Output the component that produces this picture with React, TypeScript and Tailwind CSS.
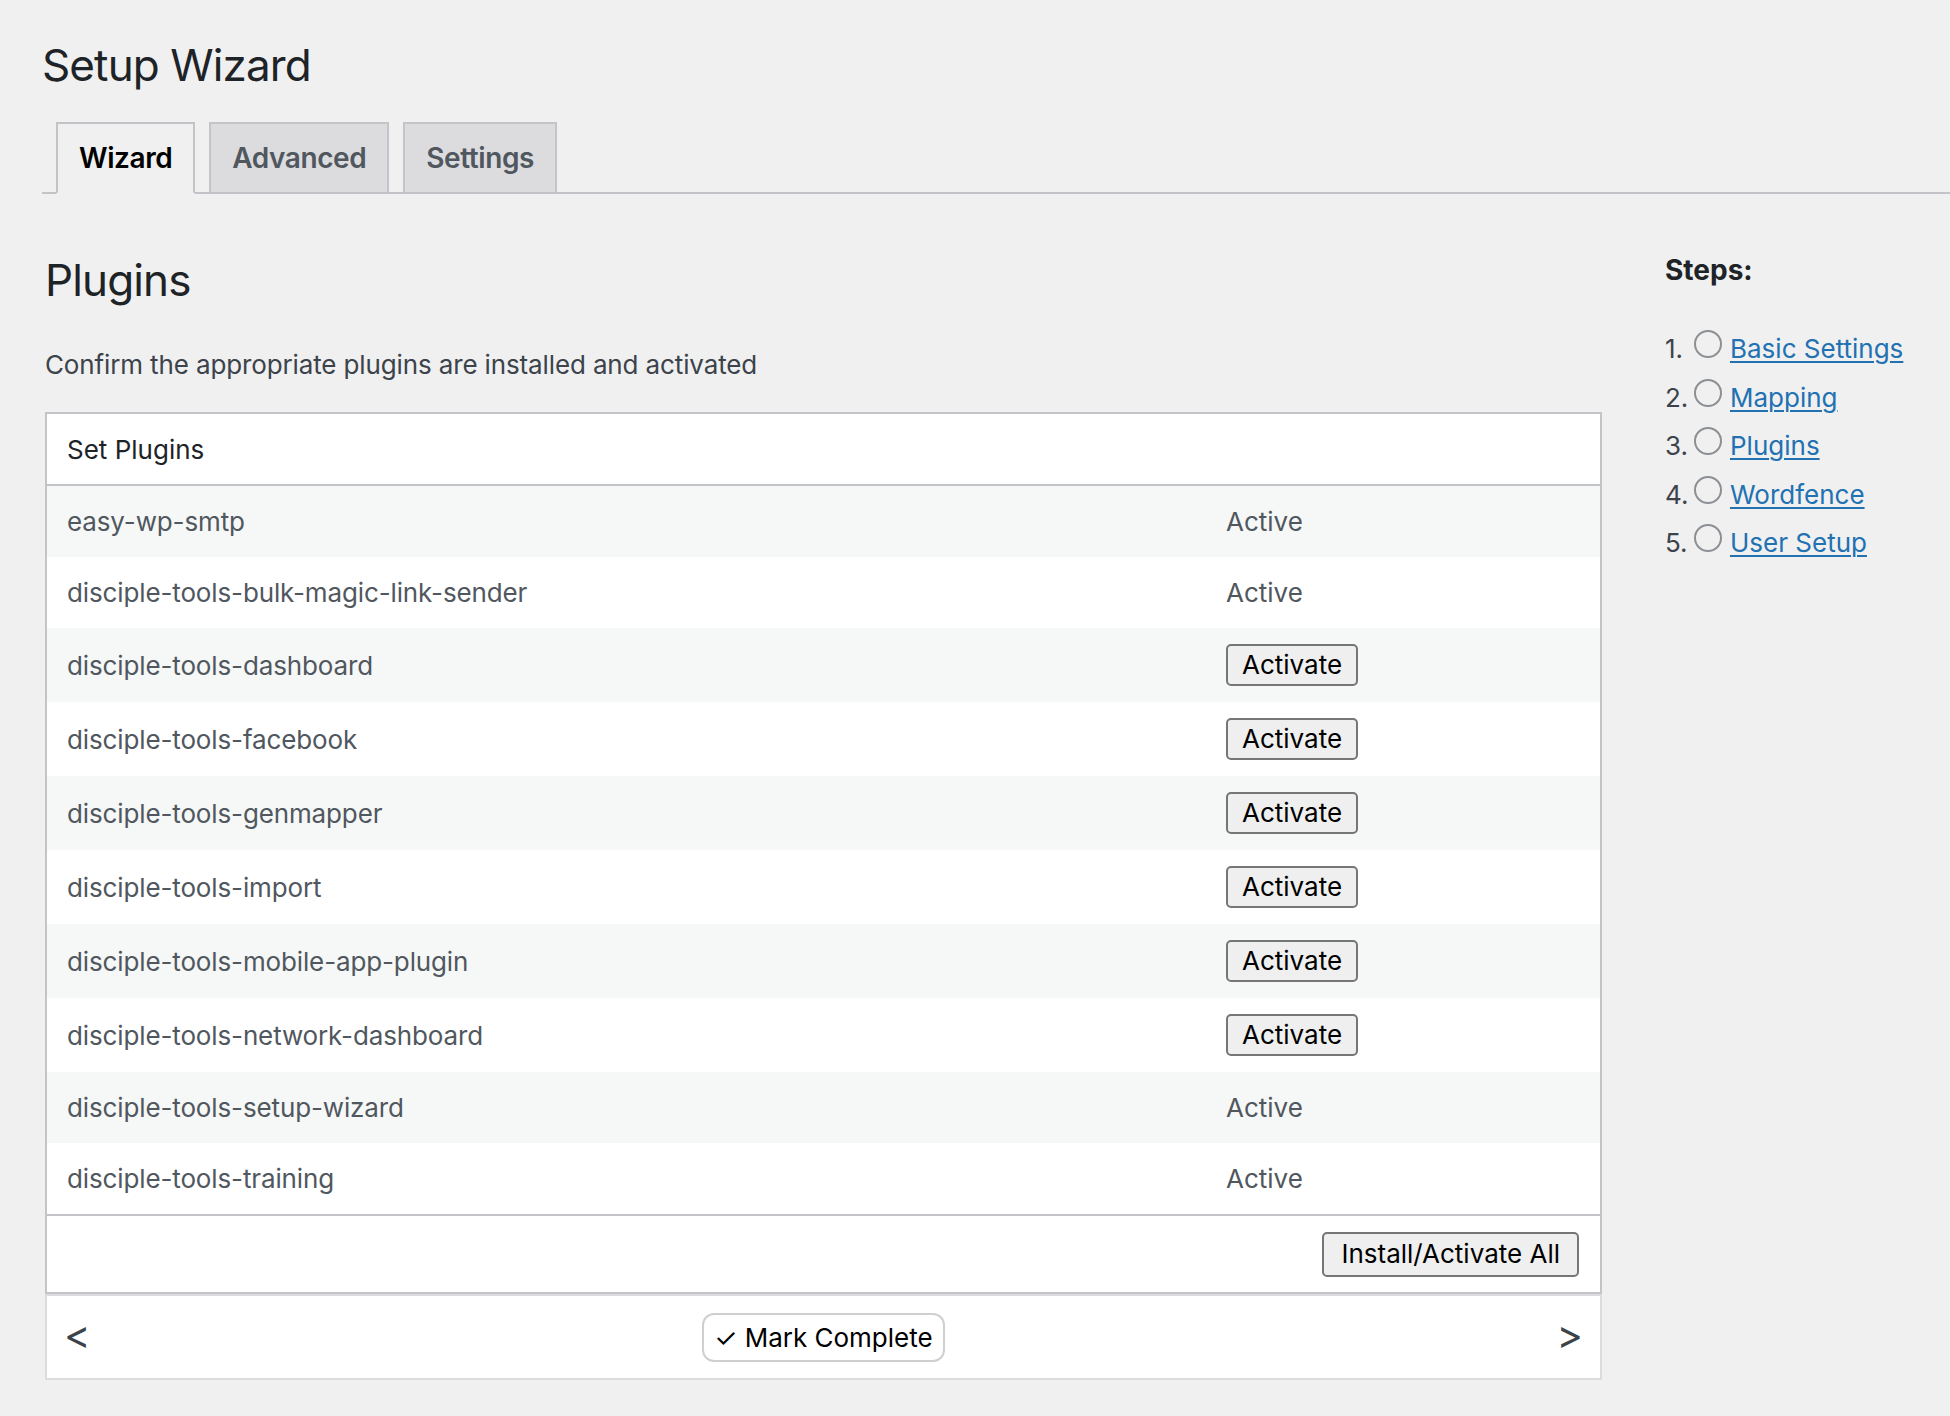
import React from 'react'

const PLUGINS = [
  { slug: 'easy-wp-smtp', active: true },
  { slug: 'disciple-tools-bulk-magic-link-sender', active: true },
  { slug: 'disciple-tools-dashboard', active: false },
  { slug: 'disciple-tools-facebook', active: false },
  { slug: 'disciple-tools-genmapper', active: false },
  { slug: 'disciple-tools-import', active: false },
  { slug: 'disciple-tools-mobile-app-plugin', active: false },
  { slug: 'disciple-tools-network-dashboard', active: false },
  { slug: 'disciple-tools-setup-wizard', active: true },
  { slug: 'disciple-tools-training', active: true },
]

const STEPS = ['Basic Settings', 'Mapping', 'Plugins', 'Wordfence', 'User Setup']

const TABS = [
  { label: 'Wizard', current: true },
  { label: 'Advanced', current: false },
  { label: 'Settings', current: false },
]

function Tabs() {
  return (
    <div className="flex border-b-2 border-[#c3c4c7] mt-[28px]">
      {TABS.map((tab) => (
        <div
          key={tab.label}
          className={`ml-[14px] -mb-[2px] h-[72px] flex items-center px-[21px] border-2 text-[28px] font-semibold tracking-[-0.015em] ${
            tab.current
              ? 'bg-[#f0f0f1] border-[#c3c4c7] border-b-[#f0f0f1] text-black'
              : 'bg-[#dcdcde] border-[#c3c4c7] text-[#50575e]'
          }`}
        >
          {tab.label}
        </div>
      ))}
    </div>
  )
}

function WpButton({ label, className = '' }: { label: string; className?: string }) {
  return (
    <button
      className={`border-2 border-[#767676] rounded-[5px] bg-[#efefef] text-black text-[26px] leading-none ${className}`}
    >
      {label}
    </button>
  )
}

function PluginsTable() {
  return (
    <div className="mt-[29px] border-2 border-[#c3c4c7] bg-white">
      {/* header */}
      <div className="h-[72px] flex items-center px-[20px] border-b-2 border-[#c3c4c7] text-[26px] text-[#1d2327]">
        Set Plugins
      </div>

      {PLUGINS.map((plugin, i) => (
        <div
          key={plugin.slug}
          className={`flex items-center text-[26px] text-[#50575e] ${
            plugin.active ? 'h-[71px]' : 'h-[74px]'
          } ${i % 2 === 0 ? 'bg-[#f6f7f7]' : 'bg-white'}`}
        >
          <div className="w-[1179px] pl-[20px] tracking-[-0.005em]">{plugin.slug}</div>
          <div>
            {plugin.active ? 'Active' : <WpButton label="Activate" className="h-[42px] px-[14px]" />}
          </div>
        </div>
      ))}

      {/* footer */}
      <div className="h-[78px] border-t-2 border-[#c3c4c7] flex items-center justify-end pr-[21px]">
        <WpButton label="Install/Activate All" className="h-[45px] px-[17px]" />
      </div>
    </div>
  )
}

function StepNav() {
  return (
    <div className="h-[86px] border-2 border-[#dcdcde] bg-white flex items-center justify-between pl-[17px] pr-[17px]">
      <span className="text-[40px] text-[#3c434a] leading-none -mt-[4px]">&lt;</span>
      <button className="h-[49px] px-[10px] border-2 border-[#cfcfcf] rounded-[12px] bg-white text-[26px] text-black">
        ✓ Mark Complete
      </button>
      <span className="text-[40px] text-[#3c434a] leading-none -mt-[4px]">&gt;</span>
    </div>
  )
}

function StepsSidebar() {
  return (
    <div className="ml-[63px]">
      <div className="text-[28px] leading-[36px] font-bold text-[#1d2327]">Steps:</div>
      <ol className="mt-[37px]">
        {STEPS.map((step, i) => (
          <li key={step} className="text-[26px] leading-[48.5px] text-[#3c434a] whitespace-nowrap">
            <span className="inline-block w-[29px]">{i + 1}.</span>
            <span className="inline-block align-baseline w-[28px] h-[28px] rounded-full border-2 border-[#8c8f94]" />
            <a href="#" className="ml-[8px] text-[#2271b1] underline decoration-[2px] underline-offset-[3px]">
              {step}
            </a>
          </li>
        ))}
      </ol>
    </div>
  )
}

export default function App() {
  return (
    <div
      className="min-h-screen bg-[#f0f0f1] pl-[42px] pt-[37px] pb-[40px]"
      style={{ fontFamily: 'Inter, "Liberation Sans", "DejaVu Sans", sans-serif' }}
    >
      <h1 className="text-[44px] leading-[57px] text-[#1d2327] font-normal tracking-[-0.02em]">Setup Wizard</h1>

      <Tabs />

      {/* Contenido */}
      <div className="flex mt-[58px] pl-[3px]">
        <div className="w-[1557px]">
          <h2 className="text-[44px] leading-[57px] text-[#1d2327] font-normal tracking-[-0.02em]">Plugins</h2>
          <p className="mt-[38px] text-[26px] leading-[36px] text-[#3c434a] tracking-[-0.005em]">
            Confirm the appropriate plugins are installed and activated
          </p>
          <PluginsTable />
          <StepNav />
        </div>
        <StepsSidebar />
      </div>
    </div>
  )
}
